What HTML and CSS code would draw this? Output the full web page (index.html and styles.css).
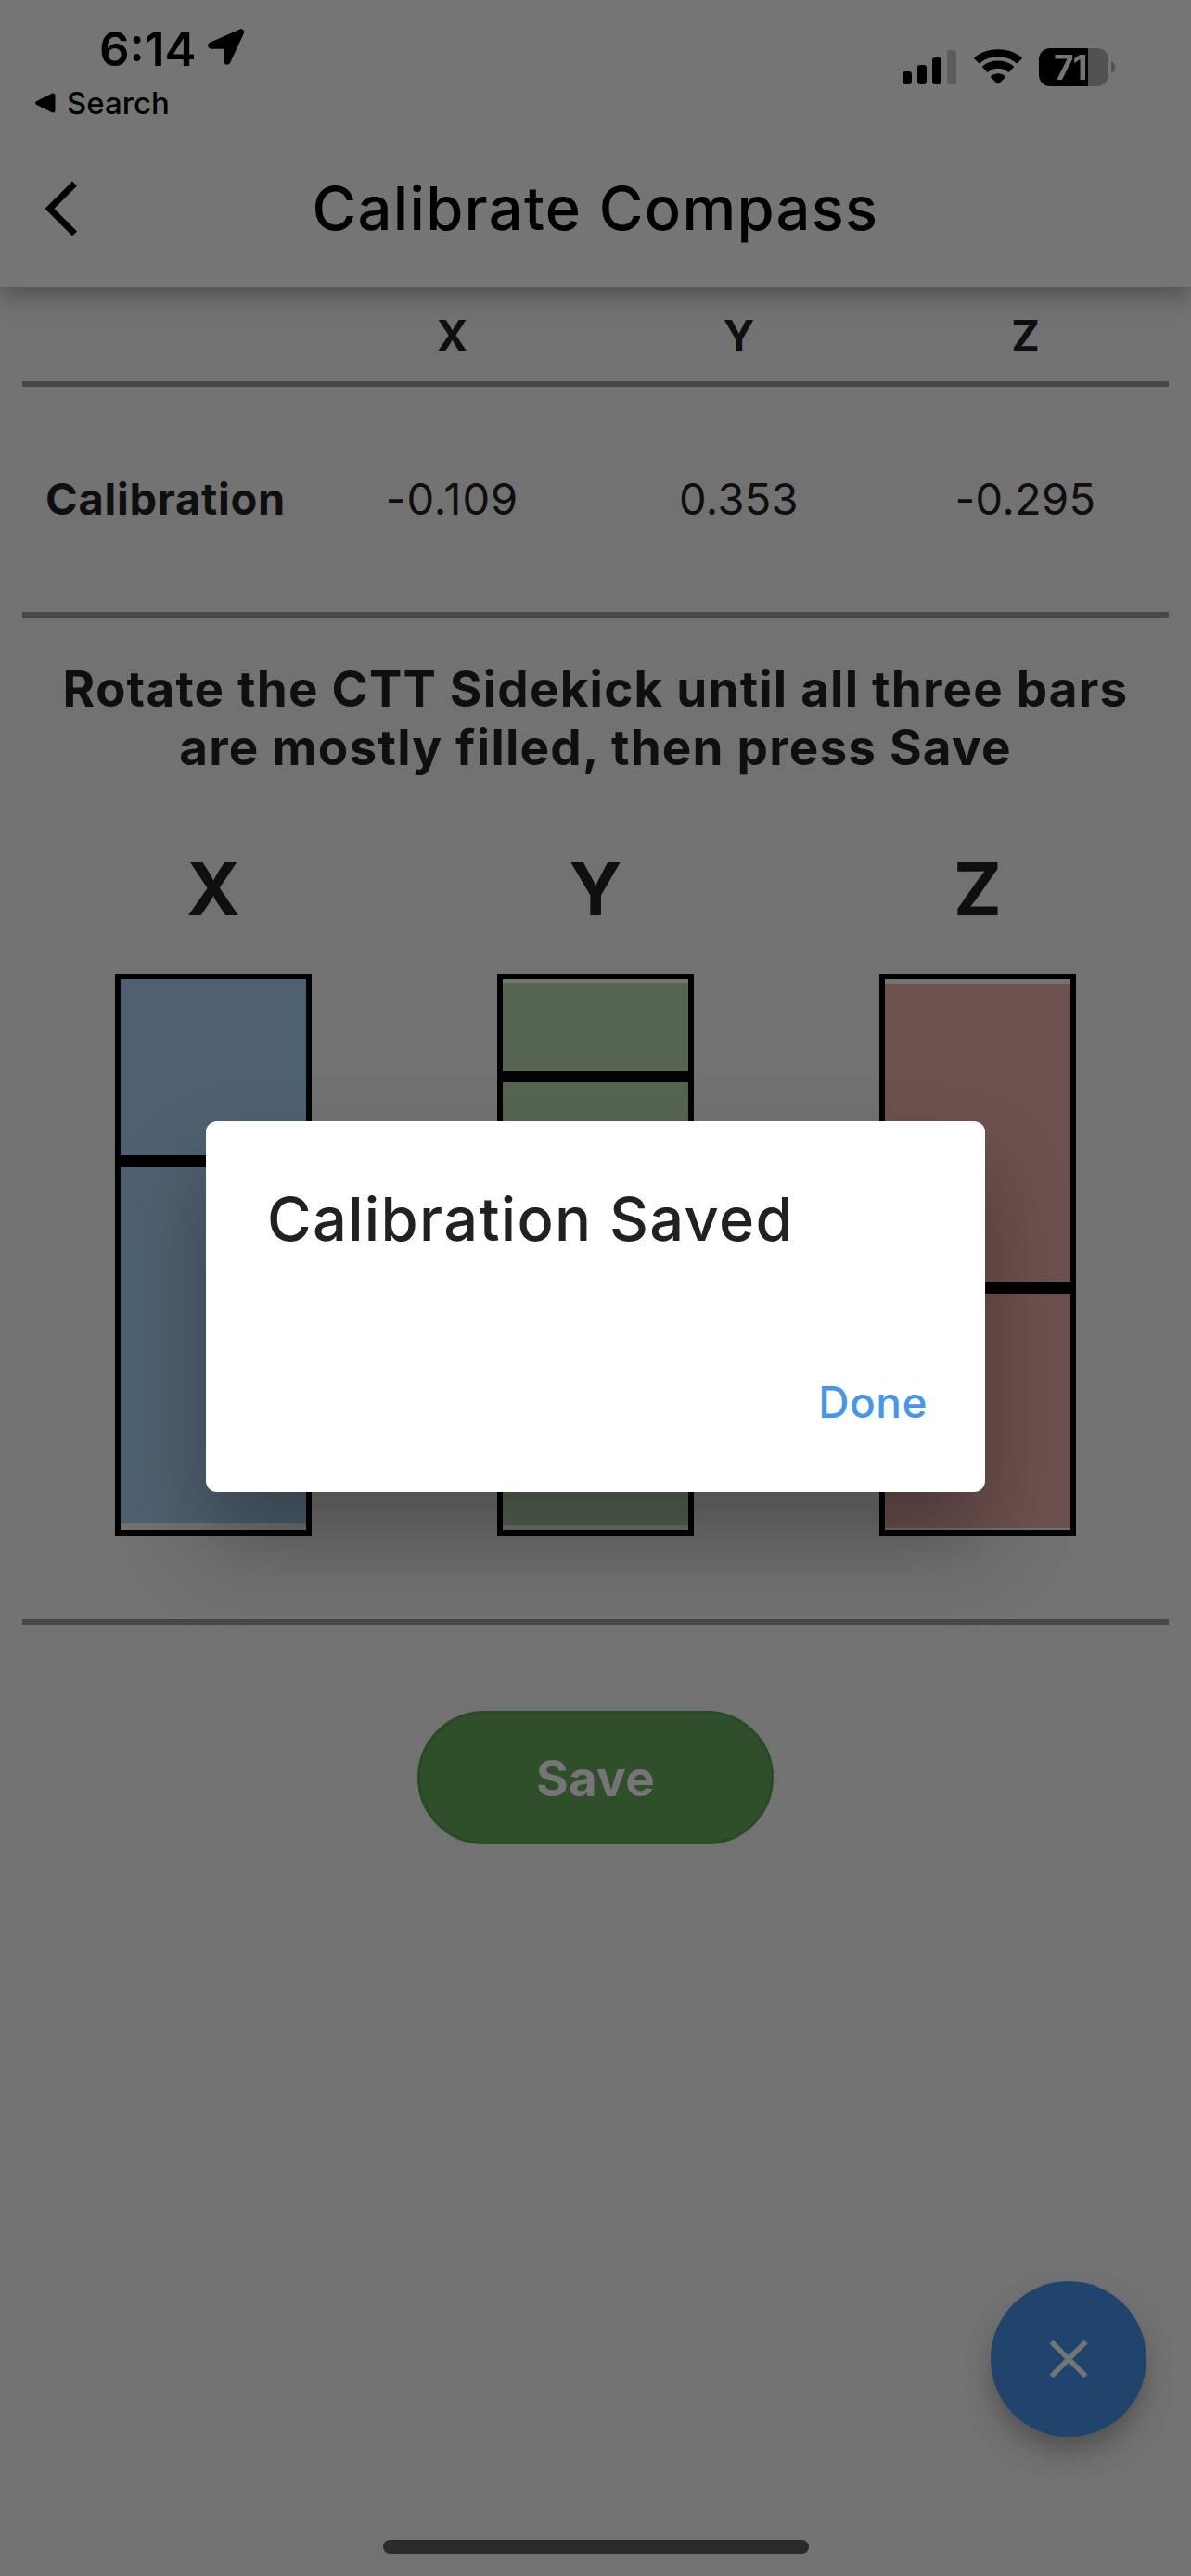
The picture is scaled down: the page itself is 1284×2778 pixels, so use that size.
FILE: index.html
```html
<!DOCTYPE html>
<html lang="en">
<head>
<meta charset="utf-8">
<title>Calibrate Compass</title>
<link rel="stylesheet" href="styles.css">
</head>
<body>
<div class="screen">
  <header class="app-header">
    <div class="status">
      <div class="status-left">
        <div class="clock"><span class="time">6:14</span>
          <svg class="location" width="40" height="40" viewBox="0 0 40 40"><path d="M34.600.6c2.800-1.200 5.600 1.400 4.300 4.300L24.200 36.500c-1.700 3.700-7 2.600-7-1.500V21.700H4c-4.300 0-5.400-5.400-1.500-7z"/></svg>
        </div>
        <div class="back-app">
          <svg width="22" height="22" viewBox="0 0 22 22"><path d="M17.600 1C19.800 0 21.500 1 21.500 3.200v15.600c0 2.200-1.700 3.200-3.900 2.200L1.500 13c-2-1-2-3 0-4z"/></svg>
          <span>Search</span>
        </div>
      </div>
      <div class="status-right">
        <svg width="58" height="37" viewBox="0 0 58 37"><rect y="23" width="10" height="14" rx="3"/><rect x="16" y="16" width="10" height="21" rx="3"/><rect x="32" y="8" width="10" height="29" rx="3"/><rect x="48" width="10" height="37" rx="3" fill="#5c5c5c"/></svg>
        <svg class="wifi" width="52" height="38" viewBox="0 0 52 38"><path d="M.8 10.700a1.500 1.500 0 0 1 0-2.100C14.500-2.700 37.500-2.700 51.200 8.600a1.500 1.500 0 0 1 0 2.100l-4 4a1.500 1.500 0 0 1-2.100 0C34.500 6.200 17.500 6.200 6.900 14.700a1.500 1.500 0 0 1-2.100 0zM9.700 20a1.500 1.500 0 0 1 0-2.100c9.500-7.300 23.100-7.300 32.600 0a1.500 1.500 0 0 1 0 2.100l-4 4.200a1.500 1.500 0 0 1-2.100 0c-6-4.700-14.400-4.700-20.400 0a1.500 1.500 0 0 1-2.100 0zM18.500 28.900c4.300-3.400 10.700-3.400 15 0 .7.600.7 1.300.1 1.900L27 37a1.500 1.500 0 0 1-2 0l-6.600-6.200c-.6-.6-.6-1.300.1-1.900z"/></svg>
        <div class="battery"><span class="level">71</span></div>
        <svg class="battery-tip" width="4" height="13" viewBox="0 0 4 13"><path d="M0 0c5.300 1.500 5.300 11.500 0 13z" fill="#525252"/></svg>
      </div>
    </div>
    <div class="title-bar">
      <svg class="back" width="35" height="60" viewBox="0 0 35 60"><path d="M31.500 3L4.500 30l27 27" fill="none" stroke="#000" stroke-width="7"/></svg>
      <h1>Calibrate Compass</h1>
    </div>
  </header>

  <main>
    <div class="row head"><span></span><span>X</span><span>Y</span><span>Z</span></div>
    <div class="row values"><b>Calibration</b><span class="wide">-0.109</span><span>0.353</span><span>-0.295</span></div>
    <p class="hint">Rotate the CTT Sidekick until all three bars<br>are mostly filled, then press Save</p>
    <div class="gauges">
      <div class="axis"><h2>X</h2><div class="bar"><i class="fill blue" style="height:190px"></i><i class="mark"></i><i class="fill blue" style="height:384px"></i></div></div>
      <div class="axis"><h2>Y</h2><div class="bar"><i class="gap" style="height:4px"></i><i class="fill green" style="height:95px"></i><i class="mark"></i><i class="fill green" style="height:478px"></i></div></div>
      <div class="axis"><h2>Z</h2><div class="bar"><i class="gap" style="height:5px"></i><i class="fill red" style="height:322px"></i><i class="mark"></i><i class="fill red" style="height:253px"></i></div></div>
    </div>
    <div class="actions"><button class="save">Save</button></div>
  </main>

  <button class="fab" aria-label="Close"><svg width="42" height="42" viewBox="0 0 42 42"><path d="M2.500 2.500l37 37m0-37l-37 37" stroke="#757575" stroke-width="5.500"/></svg></button>
  <div class="home-indicator"></div>

  <div class="dialog">
    <h3>Calibration Saved</h3>
    <button class="done">Done</button>
  </div>
</div>
</body>
</html>
```
FILE: styles.css
```css
* { box-sizing: border-box; }
body { margin: 0; background: #727272; font-family: Inter, sans-serif; color: #0f0f0f; }
button { border: 0; padding: 0; font: inherit; }
h1, h2, h3, p { margin: 0; }
svg, i { display: block; }
.screen { position: relative; width: 1284px; height: 2778px; overflow: hidden; background: #727272; }

.app-header { position: relative; height: 309px; background: #757575; color: #000; box-shadow: 0 9px 24px rgba(0,0,0,.3); }
.status { display: flex; justify-content: space-between; height: 141px; padding: 24px 82px 0 38px; }
.clock { display: flex; align-items: center; gap: 13px; height: 58px; padding-left: 69px; font-size: 51px; font-weight: 600; line-height: 58px; }
.location { margin-bottom: 5px; }
.back-app { display: flex; align-items: center; gap: 12px; height: 40px; margin-top: 9px; font-size: 33px; font-weight: 500; line-height: 40px; }
.status-right { display: flex; align-items: flex-start; padding-top: 28px; height: 69px; }
.status-right svg { margin-top: 2px; }
.status-right .wifi { margin: 1px 18px 0 19px; }
.battery { width: 75px; height: 41px; border-radius: 12px; background: linear-gradient(90deg, #000 53px, #525252 53px); }
.level { display: block; padding-left: 16px; font-size: 37px; line-height: 41px; font-weight: 650; letter-spacing: -1px; background: linear-gradient(90deg, #757575 53px, #525252 53px); -webkit-background-clip: text; background-clip: text; color: transparent; }
.status-right .battery-tip { margin: 14px 0 0 3px; }
.title-bar { display: grid; grid-template-columns: 150px 1fr 150px; align-items: center; height: 168px; }
.back { margin: 0 0 0 49px; }
h1 { font-size: 65px; font-weight: 450; line-height: 80px; letter-spacing: 1.300px; text-align: center; white-space: nowrap; }

main { padding: 0 24px; }
.row { display: grid; grid-template-columns: repeat(4, 1fr); align-items: center; text-align: center; border-bottom: 6px solid #484848; font-size: 47px; }
.head { height: 108px; padding-top: 3px; font-size: 46px; font-weight: 700; }
.values { height: 249px; padding-bottom: 2px; letter-spacing: .3px; }
.values b { font-weight: 700; letter-spacing: .75px; }
.values .wide { letter-spacing: 1px; }
.hint { padding-top: 46px; height: 234px; font-size: 53px; font-weight: 700; line-height: 63px; letter-spacing: 1.200px; text-align: center; white-space: nowrap; }
.gauges { display: grid; grid-template-columns: repeat(3, 1fr); height: 852px; border-bottom: 6px solid #484848; justify-items: center; }
h2 { height: 150px; padding-top: 11px; font-size: 78px; font-weight: 700; line-height: 96px; text-align: center; }
.bar { width: 212px; height: 606px; border: 6px solid #000; }
.gap { background: #747474; }
.mark { height: 12px; background: #000; }
.blue { background: #4f6070; }
.green { background: #566552; }
.red { background: #6d514e; }
.actions { display: flex; justify-content: center; padding-top: 93px; }
.save { width: 384px; height: 144px; padding-top: 2px; border: 3px solid #284a25; border-radius: 72px; background: #2f4f2a; color: #757575; font-size: 53px; font-weight: 700; letter-spacing: .3px; }

.fab { position: absolute; left: 1068px; top: 2460px; display: grid; place-items: center; width: 168px; height: 168px; border-radius: 50%; background: #20446c; box-shadow: 0 17px 30px -3px rgba(0,0,0,.31); }
.home-indicator { position: absolute; left: 413px; top: 2739px; width: 459px; height: 15px; border-radius: 8px; background: #2a2a2a; }

.dialog { position: absolute; left: 222px; top: 1208.500px; display: flex; flex-direction: column; justify-content: space-between; width: 840px; height: 400px; padding: 66px 62px 67px 66px; border-radius: 12px; background: #fff; color: #212121; box-shadow: 0 54px 93px rgba(0,0,0,.3); }
h3 { font-size: 65px; font-weight: 450; line-height: 80px; letter-spacing: 1.300px; white-space: nowrap; }
.done { align-self: flex-end; background: none; color: #4596ef; font-size: 46px; font-weight: 450; letter-spacing: .5px; line-height: 60px; }
```
